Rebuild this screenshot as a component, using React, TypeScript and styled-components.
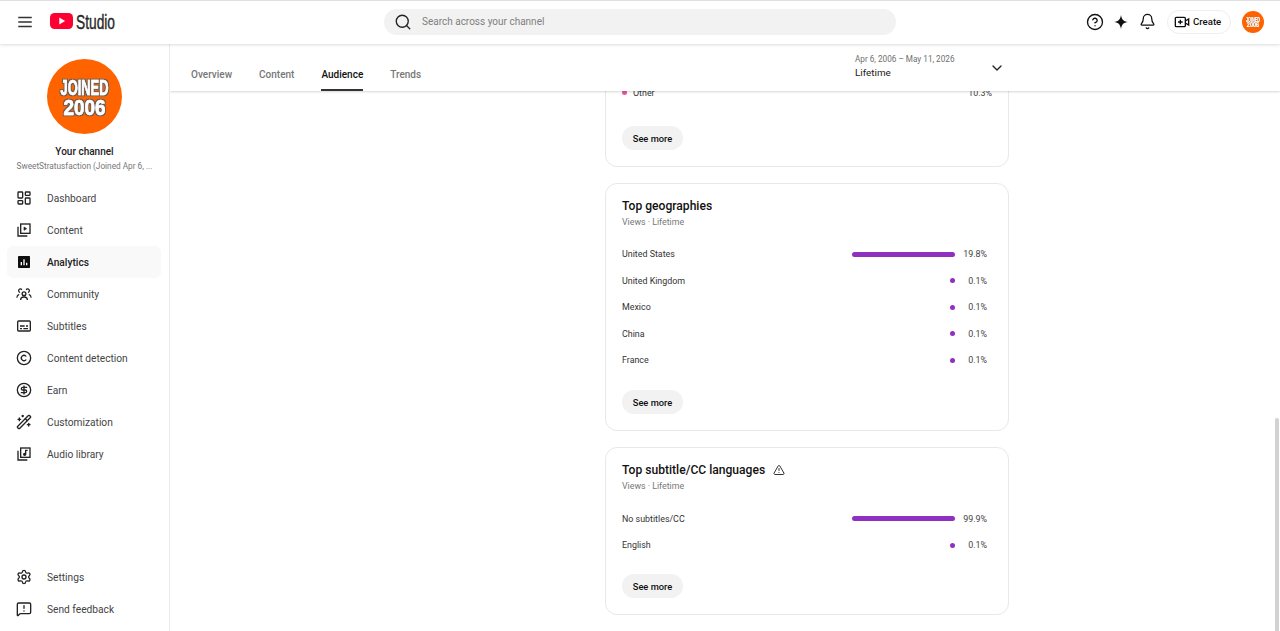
import React from "react";
import styled, { createGlobalStyle } from "styled-components";
import {
  Bell,
  ChevronDown,
  CircleDollarSign,
  CircleHelp,
  Copyright,
  LayoutDashboard,
  MessageSquareWarning,
  Search,
  Settings,
  TriangleAlert,
  WandSparkles,
} from "lucide-react";

const GlobalStyle = createGlobalStyle`
  html, body {
    margin: 0;
    height: 100%;
    overflow: hidden;
    background: #fff;
    font-family: Roboto, "Liberation Sans", sans-serif;
    color: #0f0f0f;
  }
`;

const Page = styled.div`
  position: relative;
  height: 631px;
  display: flex;
  flex-direction: column;
  overflow: hidden;
`;

const Header = styled.header`
  height: 44px;
  flex: none;
  box-sizing: border-box;
  padding-bottom: 2px;
  display: flex;
  align-items: center;
  border-top: 1px solid #e0e0e0;
  box-shadow: 0 1px 3px rgba(0, 0, 0, 0.14);
  background: #fff;
  position: relative;
  z-index: 3;
`;

const MenuButton = styled.div`
  width: 50px;
  display: flex;
  justify-content: center;
  color: #333;
`;

const LogoSvg = styled.svg`
  width: 68px;
  height: 20px;
  flex: none;
`;

const SearchBar = styled.div`
  margin-left: 266px;
  width: 512px;
  height: 26px;
  border-radius: 13px;
  background: #f2f2f2;
  display: flex;
  align-items: center;
  gap: 10px;
  padding-left: 10px;
  box-sizing: border-box;
  font-size: 10px;
  color: #808080;
`;

const HeaderActions = styled.div`
  margin-left: auto;
  margin-right: 16px;
  display: flex;
  align-items: center;
`;

const HeaderIcon = styled.span`
  display: flex;
  width: 26.5px;
  justify-content: center;
  color: #111;
`;

const CreateButton = styled.div`
  margin-left: 6px;
  margin-right: 11px;
  width: 64px;
  height: 24px;
  box-sizing: border-box;
  border: 1px solid #eeeeee;
  border-radius: 12px;
  padding-left: 6px;
  display: flex;
  align-items: center;
  gap: 3px;
  font-size: 9.6px;
  font-weight: 500;
`;

const Body = styled.div`
  flex: 1;
  min-height: 0;
  display: flex;
`;

const Sidebar = styled.aside`
  width: 170px;
  flex: none;
  box-sizing: border-box;
  border-right: 1px solid #ececec;
  display: flex;
  flex-direction: column;
  padding-top: 15px;
`;

const ChannelBlock = styled.div`
  display: flex;
  flex-direction: column;
  align-items: center;
  margin-bottom: 9px;
`;

const AvatarSvg = styled.svg<{ $size: number }>`
  display: block;
  width: ${({ $size }) => $size}px;
  height: ${({ $size }) => $size}px;
  flex: none;
`;

const ChannelTitle = styled.div`
  margin-top: 10px;
  font-size: 10px;
  line-height: 15px;
  font-weight: 500;
  color: #222;
`;

const ChannelName = styled.div`
  margin-top: 1px;
  font-size: 8.25px;
  line-height: 13px;
  color: #777;
`;

const NavList = styled.nav<{ $bottom?: boolean }>`
  display: flex;
  flex-direction: column;
  margin-top: ${({ $bottom }) => ($bottom ? "auto" : "0")};
  margin-bottom: ${({ $bottom }) => ($bottom ? "6px" : "0")};
`;

const NavItem = styled.div<{ $active?: boolean }>`
  height: 32px;
  margin: 0 8px 0 7px;
  padding-left: 9px;
  display: flex;
  align-items: center;
  gap: 15px;
  border-radius: 6px;
  font-size: 10.2px;
  font-weight: ${({ $active }) => ($active ? 500 : 400)};
  color: ${({ $active }) => ($active ? "#222" : "#444")};
  background: ${({ $active }) => ($active ? "#f9f9f9" : "transparent")};
`;

const NavIcon = styled.span`
  width: 16px;
  height: 16px;
  display: flex;
  align-items: center;
  justify-content: center;
  color: #222;
`;

const Main = styled.main`
  flex: 1;
  min-width: 0;
  display: flex;
  flex-direction: column;
  overflow: hidden;
`;

const TabBar = styled.div`
  height: 47px;
  flex: none;
  display: flex;
  align-items: flex-end;
  padding-left: 21px;
  box-shadow: 0 1px 2px rgba(0, 0, 0, 0.16);
  background: #fff;
  position: relative;
  z-index: 2;
`;

const Tab = styled.div<{ $active?: boolean }>`
  height: 47px;
  box-sizing: border-box;
  padding-top: 24px;
  margin-right: 27px;
  font-size: 10px;
  line-height: 13px;
  font-weight: 500;
  color: ${({ $active }) => ($active ? "#111" : "#777")};
  border-bottom: 2px solid ${({ $active }) => ($active ? "#333" : "transparent")};
`;

const DateRange = styled.div`
  margin-left: auto;
  margin-right: 275px;
  align-self: center;
  display: flex;
  align-items: center;
`;

const DateText = styled.div`
  width: 134px;
  margin-top: -2px;
`;

const DateLabel = styled.div`
  font-size: 8.2px;
  line-height: 13px;
  color: #6f6f6f;
`;

const DateValue = styled.div`
  font-size: 9.9px;
  line-height: 14px;
  color: #222;
`;

const Content = styled.div`
  flex: 1;
  min-height: 0;
  display: flex;
  flex-direction: column;
  align-items: center;
  gap: 16px;
  padding-left: 164px;
  overflow: hidden;
`;

const Card = styled.section<{ $clipped?: boolean }>`
  width: 404px;
  flex: none;
  box-sizing: border-box;
  border: 1px solid #e8e8e8;
  border-radius: 12px;
  padding: 15px 16px 16px;
  margin-top: ${({ $clipped }) => ($clipped ? "-69.5px" : "0")};
`;

const CardTitle = styled.h2`
  margin: 0;
  display: flex;
  align-items: center;
  gap: 8px;
  font-size: 12.1px;
  line-height: 14px;
  font-weight: 500;
  color: #111;
`;

const CardMeta = styled.div`
  margin-top: 3px;
  margin-bottom: 13px;
  font-size: 8.8px;
  line-height: 12px;
  color: #777;
`;

const Row = styled.div`
  height: 26.5px;
  display: flex;
  align-items: center;
  font-size: 8.9px;
  color: #333;
`;

const RowLabel = styled.span`
  flex: 1;
  display: flex;
  align-items: center;
  gap: 6px;
`;

const Dot = styled.span<{ $color: string }>`
  width: 5px;
  height: 5px;
  border-radius: 50%;
  background: ${({ $color }) => $color};
`;

const BarTrack = styled.div`
  width: 103px;
  display: flex;
  justify-content: flex-end;
`;

const Bar = styled.div`
  height: 5px;
  border-radius: 3px;
  background: #9030c0;
`;

const RowValue = styled.span<{ $flush?: boolean }>`
  width: 32px;
  margin-right: ${({ $flush }) => ($flush ? "0" : "5px")};
  text-align: right;
  color: #444;
`;

const SeeMore = styled.div<{ $top: number }>`
  width: 61px;
  height: 24px;
  margin-top: ${({ $top }) => $top}px;
  border-radius: 12px;
  background: #f2f2f2;
  display: flex;
  align-items: center;
  justify-content: center;
  font-size: 9.3px;
  font-weight: 500;
  color: #111;
`;

const ScrollThumb = styled.div`
  position: absolute;
  right: 1px;
  top: 418px;
  bottom: 0;
  width: 4px;
  border-radius: 2px 2px 0 0;
  background: #d2d2d2;
`;

const Avatar = ({ size, id }: { size: number; id: string }) => (
  <AvatarSvg $size={size} viewBox="0 0 75 75">
    <defs>
      <filter id={id} x="-10%" y="-10%" width="120%" height="120%">
        <feMorphology in="SourceAlpha" operator="dilate" radius="1" result="wide" />
        <feFlood floodColor="#6b5a50" />
        <feComposite in2="wide" operator="in" result="edge" />
        <feMerge>
          <feMergeNode in="edge" />
          <feMergeNode in="SourceGraphic" />
        </feMerge>
      </filter>
    </defs>
    <circle cx="37.5" cy="37.5" r="37.5" fill="#ff6300" />
    <g
      fill="#fff"
      stroke="#fff"
      strokeWidth="0.6"
      filter={`url(#${id})`}
      fontFamily="'Liberation Sans', sans-serif"
      fontWeight="700"
      fontSize="22"
      textAnchor="middle"
    >
      <text x="37.5" y="36" textLength="48" lengthAdjust="spacingAndGlyphs">
        JOINED
      </text>
      <text x="37.5" y="56" textLength="42" lengthAdjust="spacingAndGlyphs">
        2006
      </text>
    </g>
  </AvatarSvg>
);

const Logo = () => (
  <LogoSvg viewBox="0 0 68 20">
    <rect x="0" y="1" width="23" height="16" rx="4.5" fill="#ff0033" />
    <path d="M9.3 5.600v6.800l5.800-3.400z" fill="#fff" />
    <text
      x="26"
      y="16.500"
      fontFamily="'Liberation Sans', sans-serif"
      fontSize="20"
      fill="#282828"
      stroke="#282828"
      strokeWidth="0.4"
      textLength="39"
      lengthAdjust="spacingAndGlyphs"
    >
      Studio
    </text>
  </LogoSvg>
);

const Icon = ({ children }: { children: React.ReactNode }) => (
  <svg width="18" height="18" viewBox="0 0 24 24" fill="none" stroke="currentColor" strokeWidth="2">
    {children}
  </svg>
);

const ContentIcon = () => (
  <Icon>
    <rect x="7" y="3" width="14" height="14" />
    <path d="M3 7v14h14" />
    <path d="M12 7.500v5l4-2.500z" fill="currentColor" strokeWidth="1" />
  </Icon>
);

const AnalyticsIcon = () => (
  <svg width="18" height="18" viewBox="0 0 24 24">
    <rect x="3" y="3" width="18" height="18" rx="1" fill="#0f0f0f" />
    <path d="M7 12h2v5H7zM11 8h2v9h-2zM15 13h2v4h-2z" fill="#fff" />
  </svg>
);

const CommunityIcon = () => (
  <Icon>
    <circle cx="12" cy="11.500" r="2.800" />
    <path d="M7 21c0-3 2.200-4.500 5-4.500s5 1.500 5 4.500" />
    <path d="M8.800 5.800a2.600 2.600 0 1 0-2.800 3.800M4.800 12.500c-2 .7-3.500 2.500-3.500 5" strokeWidth="1.800" />
    <path d="M15.200 5.800a2.600 2.600 0 1 1 2.800 3.800M19.200 12.500c2 .7 3.500 2.500 3.500 5" strokeWidth="1.800" />
  </Icon>
);

const SubtitlesIcon = () => (
  <Icon>
    <rect x="2.500" y="4.500" width="19" height="15" rx="1.500" />
    <path d="M6 12h7M15 12h3M6 16h3M11 16h7" />
  </Icon>
);

const AudioIcon = () => (
  <Icon>
    <rect x="7" y="3" width="14" height="14" />
    <path d="M3 7v14h14" />
    <circle cx="13" cy="12.500" r="1.500" fill="currentColor" />
    <path d="M14.500 12.500V6.500h3" />
  </Icon>
);

const CreateIcon = () => (
  <svg width="16" height="16" viewBox="0 0 24 24" fill="none" stroke="currentColor" strokeWidth="2">
    <rect x="2" y="5" width="15" height="14" rx="1.500" />
    <path d="M9.500 8.500v7M6 12h7" />
    <path d="M17 10.500l5-3v9l-5-3" />
  </svg>
);

const SparkIcon = () => (
  <svg width="16" height="16" viewBox="0 0 24 24">
    <path d="M12 1.500c1 6.500 3.500 9.500 10.500 10.500-7 1-9.500 4-10.500 10.500C11 16 8.500 13 1.500 12 8.500 11 11 8 12 1.500z" fill="#111" />
  </svg>
);

const MenuIcon = () => (
  <svg width="18" height="18" viewBox="0 0 24 24" fill="none" stroke="currentColor" strokeWidth="2">
    <path d="M3 6h18M3 12h18M3 18h18" />
  </svg>
);

const navItems = [
  { label: "Dashboard", icon: <LayoutDashboard size={18} strokeWidth={2} /> },
  { label: "Content", icon: <ContentIcon /> },
  { label: "Analytics", icon: <AnalyticsIcon />, active: true },
  { label: "Community", icon: <CommunityIcon /> },
  { label: "Subtitles", icon: <SubtitlesIcon /> },
  { label: "Content detection", icon: <Copyright size={18} strokeWidth={2} /> },
  { label: "Earn", icon: <CircleDollarSign size={18} strokeWidth={2} /> },
  { label: "Customization", icon: <WandSparkles size={18} strokeWidth={2} /> },
  { label: "Audio library", icon: <AudioIcon /> },
];

const bottomItems = [
  { label: "Settings", icon: <Settings size={18} strokeWidth={2} /> },
  { label: "Send feedback", icon: <MessageSquareWarning size={18} strokeWidth={2} /> },
];

const tabs = ["Overview", "Content", "Audience", "Trends"];

const geographies = [
  { label: "United States", value: "19.8%", width: 103 },
  { label: "United Kingdom", value: "0.1%", width: 5 },
  { label: "Mexico", value: "0.1%", width: 5 },
  { label: "China", value: "0.1%", width: 5 },
  { label: "France", value: "0.1%", width: 5 },
];

const languages = [
  { label: "No subtitles/CC", value: "99.9%", width: 103 },
  { label: "English", value: "0.1%", width: 5 },
];

const StatRows = ({ rows }: { rows: typeof geographies }) => (
  <>
    {rows.map((row) => (
      <Row key={row.label}>
        <RowLabel>{row.label}</RowLabel>
        <BarTrack>
          <Bar style={{ width: row.width }} />
        </BarTrack>
        <RowValue>{row.value}</RowValue>
      </Row>
    ))}
  </>
);

export default function App() {
  return (
    <Page>
      <GlobalStyle />
      <Header>
        <MenuButton>
          <MenuIcon />
        </MenuButton>
        <Logo />
        <SearchBar>
          <Search size={18} strokeWidth={1.8} color="#222" />
          Search across your channel
        </SearchBar>
        <HeaderActions>
          <HeaderIcon>
            <CircleHelp size={18} strokeWidth={1.8} />
          </HeaderIcon>
          <HeaderIcon>
            <SparkIcon />
          </HeaderIcon>
          <HeaderIcon>
            <Bell size={17} strokeWidth={1.8} />
          </HeaderIcon>
          <CreateButton>
            <CreateIcon />
            Create
          </CreateButton>
          <Avatar size={22} id="avatar-small" />
        </HeaderActions>
      </Header>
      <Body>
        <Sidebar>
          <ChannelBlock>
            <Avatar size={75} id="avatar-large" />
            <ChannelTitle>Your channel</ChannelTitle>
            <ChannelName>SweetStratusfaction (Joined Apr 6, ...</ChannelName>
          </ChannelBlock>
          <NavList>
            {navItems.map((item) => (
              <NavItem key={item.label} $active={item.active}>
                <NavIcon>{item.icon}</NavIcon>
                {item.label}
              </NavItem>
            ))}
          </NavList>
          <NavList $bottom>
            {bottomItems.map((item) => (
              <NavItem key={item.label}>
                <NavIcon>{item.icon}</NavIcon>
                {item.label}
              </NavItem>
            ))}
          </NavList>
        </Sidebar>
        <Main>
          <TabBar>
            {tabs.map((tab) => (
              <Tab key={tab} $active={tab === "Audience"}>
                {tab}
              </Tab>
            ))}
            <DateRange>
              <DateText>
                <DateLabel>Apr 6, 2006 – May 11, 2026</DateLabel>
                <DateValue>Lifetime</DateValue>
              </DateText>
              <ChevronDown size={16} strokeWidth={2} color="#222" />
            </DateRange>
          </TabBar>
          <Content>
            <Card $clipped>
              <CardTitle>Top sources</CardTitle>
              <CardMeta>Views · Lifetime</CardMeta>
              <Row>
                <RowLabel>
                  <Dot $color="#e8559f" />
                  Other
                </RowLabel>
                <RowValue $flush>10.3%</RowValue>
              </Row>
              <SeeMore $top={20}>See more</SeeMore>
            </Card>
            <Card>
              <CardTitle>Top geographies</CardTitle>
              <CardMeta>Views · Lifetime</CardMeta>
              <StatRows rows={geographies} />
              <SeeMore $top={16.75}>See more</SeeMore>
            </Card>
            <Card>
              <CardTitle>
                Top subtitle/CC languages
                <TriangleAlert size={12} strokeWidth={2} color="#333" />
              </CardTitle>
              <CardMeta>Views · Lifetime</CardMeta>
              <StatRows rows={languages} />
              <SeeMore $top={16}>See more</SeeMore>
            </Card>
          </Content>
        </Main>
      </Body>
      <ScrollThumb />
    </Page>
  );
}
